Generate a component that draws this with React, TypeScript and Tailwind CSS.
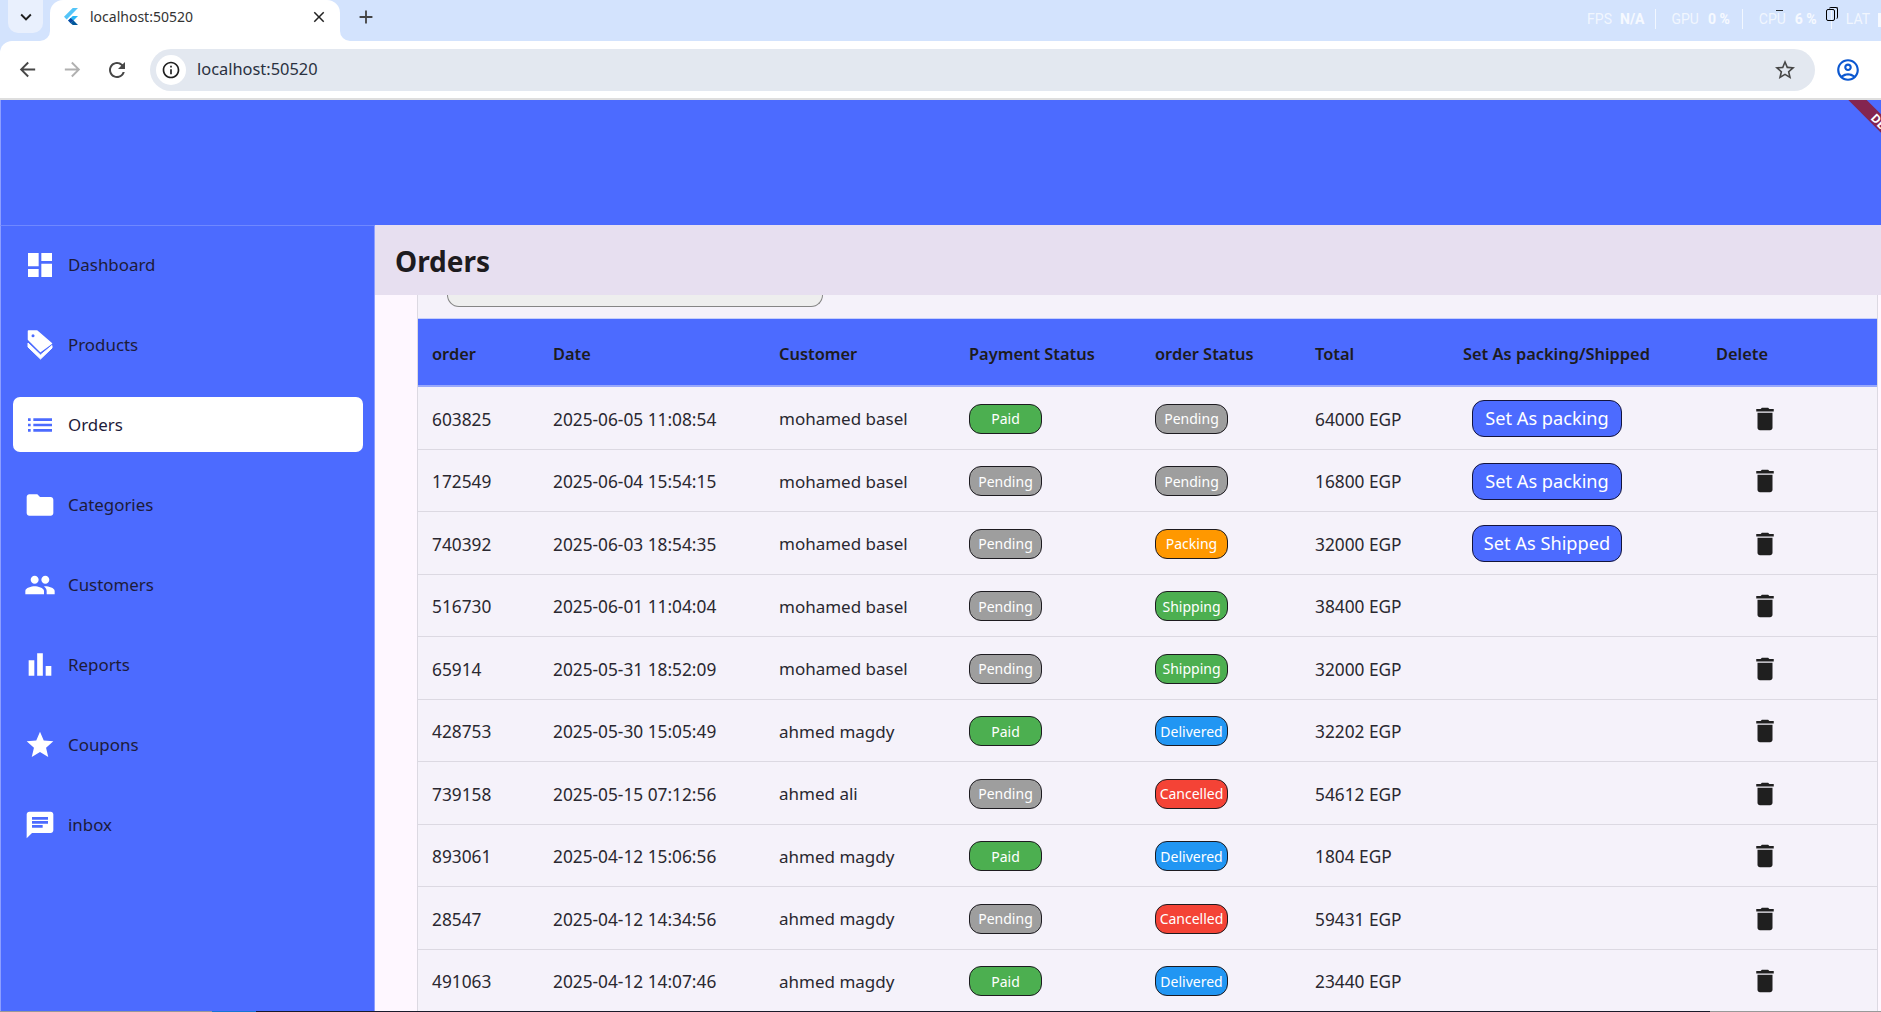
import React from "react";
import {
  MdDashboard, MdList, MdFolder, MdPeople, MdBarChart, MdStar, MdChat, MdDelete,
  MdArrowBack, MdArrowForward, MdRefresh, MdInfoOutline, MdStarBorder, MdOutlineAccountCircle,
  MdClose, MdAdd, MdKeyboardArrowDown,
} from "react-icons/md";

const FONT = "font-['Noto_Sans','Open_Sans',sans-serif]";

function TagIcon() {
  return (
    <svg width="26" height="30" viewBox="0 0 26 30">
      <path
        fill="white"
        stroke="white"
        strokeWidth="1.500"
        strokeLinejoin="round"
        fillRule="evenodd"
        d="M1.500 1h8.500L24.500 13.500 13.500 21.500 1.500 9.500zM5.800 4.200a1.400 1.400 0 1 0 0 2.800 1.400 1.400 0 0 0 0-2.800z"
      />
      <circle cx="6" cy="5.700" r="1.500" fill="#4c6bff" />
      <path
        fill="white"
        stroke="white"
        strokeWidth="1"
        strokeLinejoin="round"
        d="M1 13l12.500 12L25 15.500V18L13.500 29 1 17z"
      />
    </svg>
  );
}

function FlutterLogo() {
  return (
    <svg width="14" height="17" viewBox="0 0 24 29" className="shrink-0">
      <path fill="#54c5f8" d="M15 0 0 15l4.600 4.600L24 0z" />
      <path fill="#29b6f6" d="M15 13.500 7 21.500l4.500 4.500L24 13.500z" />
      <path fill="#01579b" d="M11.500 26 15 29h9l-8-8z" />
      <path fill="#0d47a1" d="M7 21.500 11.500 17l4.500 4.500-4.500 4.500z" />
    </svg>
  );
}

const navItems = [
  { label: "Dashboard", icon: <MdDashboard size={32} color="white" /> },
  { label: "Products", icon: <TagIcon /> },
  { label: "Orders", icon: <MdList size={32} color="#4c6bff" />, active: true },
  { label: "Categories", icon: <MdFolder size={32} color="white" /> },
  { label: "Customers", icon: <MdPeople size={32} color="white" /> },
  { label: "Reports", icon: <MdBarChart size={35} color="white" /> },
  { label: "Coupons", icon: <MdStar size={32} color="white" /> },
  { label: "inbox", icon: <MdChat size={32} color="white" /> },
];

type Order = {
  id: string; date: string; customer: string; pay: string; status: string; total: string; action?: string;
};

const orders: Order[] = [
  { id: "603825", date: "2025-06-05 11:08:54", customer: "mohamed basel", pay: "Paid", status: "Pending", total: "64000 EGP", action: "Set As packing" },
  { id: "172549", date: "2025-06-04 15:54:15", customer: "mohamed basel", pay: "Pending", status: "Pending", total: "16800 EGP", action: "Set As packing" },
  { id: "740392", date: "2025-06-03 18:54:35", customer: "mohamed basel", pay: "Pending", status: "Packing", total: "32000 EGP", action: "Set As Shipped" },
  { id: "516730", date: "2025-06-01 11:04:04", customer: "mohamed basel", pay: "Pending", status: "Shipping", total: "38400 EGP" },
  { id: "65914", date: "2025-05-31 18:52:09", customer: "mohamed basel", pay: "Pending", status: "Shipping", total: "32000 EGP" },
  { id: "428753", date: "2025-05-30 15:05:49", customer: "ahmed magdy", pay: "Paid", status: "Delivered", total: "32202 EGP" },
  { id: "739158", date: "2025-05-15 07:12:56", customer: "ahmed ali", pay: "Pending", status: "Cancelled", total: "54612 EGP" },
  { id: "893061", date: "2025-04-12 15:06:56", customer: "ahmed magdy", pay: "Paid", status: "Delivered", total: "1804 EGP" },
  { id: "28547", date: "2025-04-12 14:34:56", customer: "ahmed magdy", pay: "Pending", status: "Cancelled", total: "59431 EGP" },
  { id: "491063", date: "2025-04-12 14:07:46", customer: "ahmed magdy", pay: "Paid", status: "Delivered", total: "23440 EGP" },
];

const badgeClass: Record<string, string> = {
  Paid: "bg-[#4caf50]",
  Pending: "bg-[#9e9e9e]",
  Packing: "bg-[#ff9800]",
  Shipping: "bg-[#4caf50]",
  Delivered: "bg-[#2196f3]",
  Cancelled: "bg-[#f44336]",
};

const COLS = "grid grid-cols-[135px_226px_190px_186px_160px_148px_253px_161px]";

function Badge({ text }: { text: string }) {
  return (
    <span className={`flex h-[30px] w-[73px] items-center justify-center rounded-[12px] border-[1.5px] border-[#1d1b20] text-[14px] text-white ${badgeClass[text]}`}>
      {text}
    </span>
  );
}

function BrowserChrome() {
  return (
    <div className="shrink-0 bg-[#d3e3fd]">
      <div className="flex h-[41px] items-start">
        <div className="ml-2 flex h-[33px] w-[35px] items-center justify-center rounded-b-[10px] bg-[#e9f0fd]">
          <MdKeyboardArrowDown size={22} color="#1f1f1f" />
        </div>
        <div className="relative ml-[7px] flex h-[41px] w-[290px] items-center rounded-t-[13px] bg-white pb-[8px] pl-[14px] pr-[12px]">
          <span className="absolute bottom-0 left-[-10px] h-[10px] w-[10px] bg-white">
            <span className="block h-full w-full rounded-br-[10px] bg-[#d3e3fd]" />
          </span>
          <span className="absolute bottom-0 right-[-10px] h-[10px] w-[10px] bg-white">
            <span className="block h-full w-full rounded-bl-[10px] bg-[#d3e3fd]" />
          </span>
          <FlutterLogo />
          <span className="ml-[12px] flex-1 font-['Noto_Sans',sans-serif] text-[14px] text-[#333]">localhost:50520</span>
          <MdClose size={18} color="#222" />
        </div>
        <div className="ml-[15px] flex h-[33px] items-center">
          <MdAdd size={22} color="#444" />
        </div>
        <div className="ml-auto mt-[9px] flex items-center font-['Roboto',sans-serif] text-[14px] text-white/70">
          <span>FPS</span>
          <span className="ml-2 font-bold text-white/80">N/A</span>
          <span className="ml-[11px] h-[20px] w-px -translate-y-[1px] bg-white/70" />
          <span className="ml-[15px]">GPU</span>
          <span className="ml-[9px] font-bold text-white/80">0 %</span>
          <span className="ml-[12px] h-[20px] w-px -translate-y-[1px] bg-white/70" />
          <span className="relative ml-[16px]">
            CPU
            <span className="absolute left-[17px] top-[1px] h-px w-[7px] bg-black/80" />
          </span>
          <span className="ml-[9px] font-bold text-white/80">6 %</span>
          <span className="relative ml-[14px] h-[20px] w-px -translate-y-[1px] bg-white/70">
            <span className="absolute -left-[5px] top-[0px] h-[12px] w-[9px] rounded-[2px] border border-black" />
            <span className="absolute -left-[2px] top-[-2px] h-[12px] w-[9px] rounded-[2px] border-r border-t border-black" />
          </span>
          <span className="ml-[14px] whitespace-nowrap">LAT</span>
          <span className="ml-[8px] h-[14px] w-[3px] bg-white/80" />
        </div>
      </div>
      <div className="flex h-[59px] items-center rounded-tl-[12px] border-b-[2px] border-[#dedede] bg-white">
        <div className="ml-[15px] flex w-[24px] justify-center"><MdArrowBack size={23} color="#474747" /></div>
        <div className="ml-[21px] flex w-[24px] justify-center"><MdArrowForward size={23} color="#b0b0b0" /></div>
        <div className="ml-[21px] flex w-[24px] justify-center"><MdRefresh size={24} color="#474747" /></div>
        <div className="ml-[21px] flex h-[42px] flex-1 items-center rounded-full bg-[#e3e8f0] pl-[6px] pr-[18px]">
          <span className="flex h-[30px] w-[30px] items-center justify-center rounded-full bg-white">
            <MdInfoOutline size={20} color="#1f1f1f" />
          </span>
          <span className="ml-[11px] flex-1 font-['Noto_Sans',sans-serif] text-[16.4px] text-[#2a3140]">localhost:50520</span>
          <MdStarBorder size={24} color="#474747" />
        </div>
        <div className="ml-[18px] mr-[18px] flex w-[30px] justify-center">
          <MdOutlineAccountCircle size={26} color="#0b57d0" />
        </div>
      </div>
    </div>
  );
}

function Sidebar() {
  return (
    <aside className="flex w-[375px] shrink-0 flex-col gap-[25px] border-x border-x-[#8d9eff] border-t border-t-[#6f88ff] bg-[#4c6bff] pl-[12px] pr-[11px] pt-[11px]">
      {navItems.map((item) => (
        <div
          key={item.label}
          className={`flex h-[55px] shrink-0 items-center rounded-[7px] pl-[13px] ${item.active ? "bg-white" : ""}`}
        >
          <span className="flex w-[28px] items-center justify-center">
            <span className="flex h-[34px] w-[34px] shrink-0 items-center justify-center">{item.icon}</span>
          </span>
          <span className="ml-[14px] text-[16.9px] text-[#1d1b3a]">{item.label}</span>
        </div>
      ))}
    </aside>
  );
}

function OrdersTable() {
  const headers = ["order", "Date", "Customer", "Payment Status", "order Status", "Total", "Set As packing/Shipped", "Delete"];
  return (
    <div>
      <div className={`${COLS} h-[69px] items-center border-b-[2px] border-b-[#98a8fb] border-t border-t-[#c5cffc] bg-[#4c6bff] text-[16.4px] font-semibold text-[#1d1b20]`}>
        {headers.map((h, i) => (
          <div key={h} className={`translate-y-[2px] whitespace-nowrap ${i === 0 ? "pl-[14px]" : ""}`}>{h}</div>
        ))}
      </div>
      {orders.map((o) => (
        <div key={o.id} className={`${COLS} h-[62.500px] items-center border-b-[1.500px] border-[#dcd9e2] text-[17.300px] text-[#2a2830]`}>
          <div className="translate-y-[2px] pl-[14px]">{o.id}</div>
          <div className="translate-y-[2px] whitespace-nowrap">{o.date}</div>
          <div className="translate-y-[1px] text-[17px]">{o.customer}</div>
          <div className="translate-y-[1px]"><Badge text={o.pay} /></div>
          <div className="translate-y-[1px]"><Badge text={o.status} /></div>
          <div className="translate-y-[2px]">{o.total}</div>
          <div className="translate-y-[1px]">
            {o.action && (
              <button className="ml-[9px] flex h-[37px] w-[150px] items-center justify-center rounded-[12px] border-[1.500px] border-[#14143c] bg-[#4c6bff] text-[18.200px] text-white">
                {o.action}
              </button>
            )}
          </div>
          <div className="translate-y-[1px] pl-[34px]">
            <MdDelete size={30} color="#1f1f1f" />
          </div>
        </div>
      ))}
    </div>
  );
}

function Banner() {
  return (
    <div className="absolute right-0 top-0 h-[60px] w-[60px] overflow-hidden">
      <div className="absolute left-[1px] top-[18px] flex h-[13px] w-[120px] rotate-45 items-center justify-center bg-[#842550] text-[12px] font-bold leading-none text-white">
        <span className="translate-x-[8px]">DEBUG</span>
      </div>
    </div>
  );
}

export default function App() {
  return (
    <div className={`flex h-[1012px] w-[1881px] flex-col overflow-hidden ${FONT}`}>
      <BrowserChrome />
      <div className="relative h-[125px] shrink-0 border-l border-l-[#8d9eff] bg-[#4c6bff]">
        <Banner />
      </div>
      <div className="flex min-h-0 flex-1">
        <Sidebar />
        <main className="flex min-w-0 flex-1 flex-col bg-[#fef7ff]">
          <div className="flex h-[70px] shrink-0 items-center bg-[#e7dff0] pl-[20px]">
            <h1 className="translate-y-[1px] text-[28px] font-bold text-[#1d1b20]">Orders</h1>
          </div>
          <div className="ml-[42px] min-h-0 w-[1461px] flex-1 overflow-hidden border-x border-[#dcd9e2] bg-[#f5f2fa]">
            <div className="h-[23px] pl-[29px]">
              <div className="h-[12px] w-[376px] rounded-b-[12px] border-x-[1.500px] border-b-[1.500px] border-[#858585] bg-[#eeeeee]" />
            </div>
            <OrdersTable />
          </div>
        </main>
      </div>
      <div className="flex h-px shrink-0 bg-[#1a1a2a]">
        <span className="w-[212px] bg-[#999]" />
        <span className="w-[44px] bg-[#1976d2]" />
        <span className="ml-auto w-[171px] bg-[#999]" />
      </div>
    </div>
  );
}
